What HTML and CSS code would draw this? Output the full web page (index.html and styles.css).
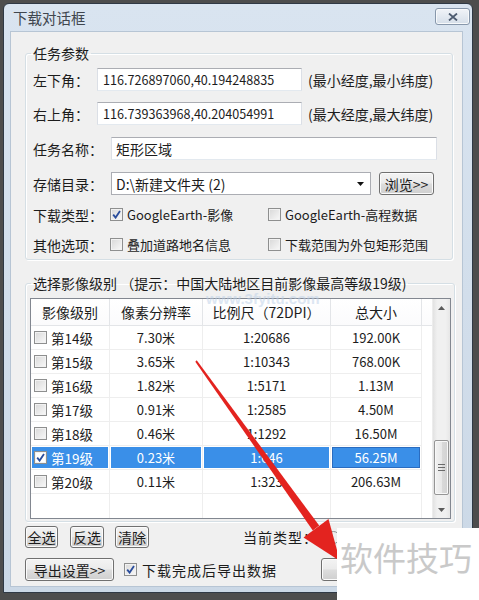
FILE: index.html
```html
<!DOCTYPE html>
<html lang="zh-CN">
<head>
<meta charset="utf-8">
<title>下载对话框</title>
<link rel="stylesheet" href="styles.css">
</head>
<body>
<div class="window">
  <div class="titlebar">
    <span class="title">下载对话框</span>
    <span class="close"><svg viewBox="0 0 10 8" width="10" height="8"><path d="M1 0.5 L9 7.5 M9 0.5 L1 7.5" stroke="#4d5b70" stroke-width="1.8" fill="none"/></svg></span>
  </div>
  <div class="client">
    <fieldset class="group g1">
      <legend>任务参数</legend>
      <div class="row r1">
        <span class="lbl">左下角：</span>
        <span class="input coord">116.726897060,40.194248835</span>
        <span class="note">(最小经度,最小纬度)</span>
      </div>
      <div class="row r2">
        <span class="lbl">右上角：</span>
        <span class="input coord">116.739363968,40.204054991</span>
        <span class="note">(最大经度,最大纬度)</span>
      </div>
      <div class="row r3">
        <span class="lbl">任务名称：</span>
        <span class="input name">矩形区域</span>
      </div>
      <div class="row r4">
        <span class="lbl">存储目录：</span>
        <span class="input combo"><span class="combo-text">D:\新建文件夹 (2)</span><svg class="drop" viewBox="0 0 7 4" width="7" height="4"><path d="M0 0 H7 L3.5 4 Z" fill="#111"/></svg></span>
        <span class="btn browse">浏览&gt;&gt;</span>
      </div>
      <div class="row r5">
        <span class="lbl">下载类型：</span>
        <span class="check first"><span class="cb on"><svg viewBox="0 0 9 9"><path d="M1.2 4.6 L3.6 7.6 L8 1" stroke="#2a4d9c" stroke-width="1.8" fill="none"/></svg></span>GoogleEarth-影像</span>
        <span class="check"><span class="cb"></span>GoogleEarth-高程数据</span>
      </div>
      <div class="row r6">
        <span class="lbl">其他选项：</span>
        <span class="check first"><span class="cb"></span>叠加道路地名信息</span>
        <span class="check"><span class="cb"></span>下载范围为外包矩形范围</span>
      </div>
    </fieldset>

    <fieldset class="group g2">
      <legend>选择影像级别 （提示：中国大陆地区目前影像最高等级19级)</legend>
      <div class="list">
        <div class="cols">
          <div class="hrow">
            <span class="hc">影像级别</span>
            <span class="hc">像素分辨率</span>
            <span class="hc">比例尺（72DPI）</span>
            <span class="hc">总大小</span>
            <span class="hc last"></span>
          </div>
          <div class="lrow"><span class="c c1"><span class="cb"></span>第14级</span><span class="c">7.30米</span><span class="c">1:20686</span><span class="c">192.00K</span><span class="c last"></span></div>
          <div class="lrow"><span class="c c1"><span class="cb"></span>第15级</span><span class="c">3.65米</span><span class="c">1:10343</span><span class="c">768.00K</span><span class="c last"></span></div>
          <div class="lrow"><span class="c c1"><span class="cb"></span>第16级</span><span class="c">1.82米</span><span class="c">1:5171</span><span class="c">1.13M</span><span class="c last"></span></div>
          <div class="lrow"><span class="c c1"><span class="cb"></span>第17级</span><span class="c">0.91米</span><span class="c">1:2585</span><span class="c">4.50M</span><span class="c last"></span></div>
          <div class="lrow"><span class="c c1"><span class="cb"></span>第18级</span><span class="c">0.46米</span><span class="c">1:1292</span><span class="c">16.50M</span><span class="c last"></span></div>
          <div class="lrow sel"><span class="c c1"><span class="cb on white"><svg viewBox="0 0 9 9"><path d="M1.2 4.6 L3.6 7.6 L8 1" stroke="#2a4d9c" stroke-width="1.8" fill="none"/></svg></span>第19级</span><span class="c">0.23米</span><span class="c">1:646</span><span class="c focus">56.25M</span><span class="c last"></span></div>
          <div class="lrow"><span class="c c1"><span class="cb"></span>第20级</span><span class="c">0.11米</span><span class="c">1:323</span><span class="c">206.63M</span><span class="c last"></span></div>
          <div class="lrow empty"><span class="c"></span><span class="c"></span><span class="c"></span><span class="c"></span><span class="c last"></span></div>
        </div>
        <div class="vscroll">
          <span class="sbtn"><svg viewBox="0 0 7 4" width="7" height="4"><path d="M0 4 H7 L3.5 0 Z" fill="#5a5a5a"/></svg></span>
          <span class="track"><span class="thumb"><span class="grip"></span></span></span>
          <span class="sbtn"><svg viewBox="0 0 7 4" width="7" height="4"><path d="M0 0 H7 L3.5 4 Z" fill="#5a5a5a"/></svg></span>
        </div>
      </div>
    </fieldset>

    <div class="btnrow b1">
      <span class="btn sm">全选</span>
      <span class="btn sm">反选</span>
      <span class="btn sm">清除</span>
      <span class="curtype">当前类型：</span>
      <span class="radio"></span>
    </div>
    <div class="btnrow b2">
      <span class="btn export">导出设置&gt;&gt;</span>
      <span class="check after"><span class="cb on"><svg viewBox="0 0 9 9"><path d="M1.2 4.6 L3.6 7.6 L8 1" stroke="#2a4d9c" stroke-width="1.8" fill="none"/></svg></span>下载完成后导出数据</span>
      <span class="btn hidden-btn"></span>
    </div>
  </div>
</div>

<span class="site-mark">www.3fyitu.com</span>
<svg class="arrow" viewBox="0 0 479 600" width="479" height="600">
  <path d="M195.3 361.7 L196.7 360.3 L319.2 525.6 L312.8 530.4 Z" fill="#e3231f"/>
  <path d="M303.5 537.5 L328.5 519 L340 561 Z" fill="#e3231f"/>
</svg>
<div class="badge">软件技巧</div>
</body>
</html>
```

FILE: styles.css
```css
* { box-sizing: border-box; }
html, body { margin: 0; padding: 0; }
body {
  width: 479px;
  height: 600px;
  overflow: hidden;
  position: relative;
  background: #4d4d4d;
  font-family: "Noto Sans CJK SC", "Noto Sans", sans-serif;
  font-size: 14px;
  color: #1c1c1c;
}

.window {
  margin: 3px 0 0 3px;
  width: 470px;
  height: 590px;
  border: 1px solid #2f3945;
  border-radius: 6px 6px 0 0;
  background: linear-gradient(#d9e4f0, #cbd8e6);
  padding: 0 9px 5px 6px;
  display: flex;
  flex-direction: column;
}

.titlebar {
  height: 27px;
  margin: 0 -9px 0 -6px;
  padding-left: 9px;
  display: flex;
  align-items: flex-start;
  justify-content: space-between;
  flex: none;
}
.title {
  line-height: 28px;
  font-size: 14.5px;
  color: #40464e;
}
.close {
  margin: 4px 2px 0 0;
  width: 35px;
  height: 17px;
  border: 1px solid #8797ab;
  border-radius: 3px;
  background: linear-gradient(#f1f4f8, #d5dee9);
  box-shadow: inset 0 0 0 1px #f7f9fb;
  display: flex;
  align-items: center;
  justify-content: center;
}

.client {
  flex: 1;
  background: #f0f0f0;
  border: 1px solid #b7c5d4;
  padding: 0 9px 0 14px;
  display: flex;
  flex-direction: column;
}

.group {
  margin: 0;
  min-width: 0;
  border: 1px solid #d5dfe5;
  border-radius: 3px;
  box-shadow: inset 1px 1px 0 #fff, 1px 1px 0 #fff;
}
.group legend {
  padding: 0 2px;
  line-height: 20px;
  font-size: 14px;
  color: #1c1c1c;
}
.g1 {
  width: 428px;
  margin-top: 11px;
  padding: 5px 0 3px 7px;
}
.g1 legend { margin-left: -2px; }

.row {
  display: flex;
  align-items: center;
  height: 23px;
  gap: 8px;
}
.r2 { margin-top: 11px; }
.r3 { margin-top: 12px; }
.r4 { margin-top: 12px; }
.r5 { margin-top: 8px; }
.r6 { margin-top: 7px; }

.lbl { white-space: nowrap; }

.input {
  height: 23px;
  background: #fff;
  border: 1px solid #dbdfe6;
  border-top-color: #abadb3;
  border-bottom-color: #e3e9ef;
  display: flex;
  align-items: center;
  padding-left: 5px;
  font-size: 14px;
  white-space: nowrap;
}
.coord { width: 205px; font-size: 12.6px; }
.note { margin-left: -2px; white-space: nowrap; }
.name { width: 326px; padding-left: 4px; }
.combo {
  width: 260px;
  justify-content: space-between;
  padding: 0 6px 0 4px;
  border-color: #abadb3;
}
.drop { flex: none; }

.btn {
  height: 23px;
  border: 1px solid #707070;
  border-radius: 3px;
  background: linear-gradient(#f3f3f3 0%, #ebebeb 48%, #dddddd 52%, #cfcfcf 100%);
  box-shadow: inset 0 0 0 1px #fbfbfb;
  display: inline-flex;
  align-items: center;
  justify-content: center;
  font-size: 14px;
  white-space: nowrap;
  flex: none;
}
.browse { width: 55px; margin-left: 0; }

.check {
  display: inline-flex;
  align-items: center;
  gap: 4px;
  font-size: 13px;
  white-space: nowrap;
}
.check.first { width: 158px; margin-left: -1px; }
.row .check + .check { margin-left: -8px; }

.cb {
  width: 13px;
  height: 13px;
  flex: none;
  border: 1px solid #8e8f8f;
  background: linear-gradient(135deg, #d8d8d8, #f9f9f9);
  box-shadow: inset 0 0 0 1px #f2f2f2;
  display: inline-flex;
  align-items: center;
  justify-content: center;
}
.cb svg { width: 9px; height: 9px; }
.cb.white { background: #fff; }

.g2 {
  width: 430px;
  margin-top: 13px;
  padding: 5px 3px 2px 4px;
}
.g2 legend { margin-left: 1px; white-space: nowrap; }

.list {
  width: 421px;
  height: 221px;
  border: 1px solid #828790;
  background: #fff;
  display: flex;
}
.cols {
  width: 401px;
  display: flex;
  flex-direction: column;
}
.hrow, .lrow {
  display: grid;
  grid-template-columns: 79px 93px 128px 91px 10px;
}
.hrow { height: 27px; }
.hc {
  border-right: 1px solid #e3e5e8;
  border-bottom: 1px solid #e3e5e8;
  display: flex;
  align-items: center;
  justify-content: center;
  font-size: 14px;
  white-space: nowrap;
  background: linear-gradient(#ffffff, #fbfbfc);
}
.hc.last { border-right: none; }
.lrow { height: 24px; }
.c {
  border-right: 1px solid #eeeeee;
  border-bottom: 1px solid #eeeeee;
  display: flex;
  align-items: center;
  justify-content: center;
  font-size: 13px;
  white-space: nowrap;
}
.c.last { border-right: none; border-bottom: none; }
.c1 {
  justify-content: flex-start;
  padding-left: 3px;
  gap: 4px;
  font-size: 13.5px;
}
.empty .c { border-bottom: none; }
.sel .c {
  background: #3a8fe8;
  color: #fff;
  box-shadow: inset 0 0 0 1px #fff;
}
.sel .c.last { background: #fff; box-shadow: none; }
.sel .c.focus { box-shadow: inset 0 0 0 1px #fff, inset 0 0 0 2px #2a6cc0; }

.vscroll {
  width: 18px;
  display: flex;
  flex-direction: column;
  background: linear-gradient(90deg, #e2e2e2, #f0f0f0 25%, #f0f0f0 75%, #e6e6e6);
  border-left: 1px solid #ececec;
}
.sbtn {
  height: 17px;
  display: flex;
  align-items: center;
  justify-content: center;
  flex: none;
}
.track { flex: 1; display: flex; flex-direction: column; }
.thumb {
  margin: 124px 1px 0 1px;
  height: 55px;
  border: 1px solid #959595;
  border-radius: 2px;
  background: linear-gradient(90deg, #f2f2f2, #e8e8e8 50%, #dadada 50%, #d2d2d2);
  box-shadow: inset 0 0 0 1px #f8f8f8;
  display: flex;
  align-items: center;
  justify-content: center;
}
.grip {
  width: 7px;
  height: 7px;
  background: repeating-linear-gradient(#6a6a6a 0 1px, transparent 1px 3px);
}

.btnrow {
  display: flex;
  align-items: center;
}
.b1 { margin-top: 4px; height: 22px; gap: 11px; }
.b1 .btn { height: 22px; }
.sm { width: 34px; }
.b1 .sm:first-child { width: 33px; margin-right: 1px; }
.curtype { margin-left: 83px; white-space: nowrap; font-size: 14px; letter-spacing: 1px; }
.radio {
  width: 13px;
  height: 13px;
  border: 1px solid #8e8f8f;
  border-radius: 50%;
  background: #eee;
  margin-left: -2px;
}
.b2 { margin-top: 10px; height: 23px; }
.export { width: 89px; }
.check.after { margin-left: 10px; gap: 5px; font-size: 14px; letter-spacing: 1px; }
.hidden-btn { width: 60px; margin-left: 44px; }

.site-mark {
  position: absolute;
  left: 206px;
  top: 290px;
  font-family: "Liberation Sans", sans-serif;
  font-size: 15px;
  font-weight: bold;
  color: #bcd0e8;
  opacity: 0.5;
}
.arrow {
  position: absolute;
  left: 0;
  top: 0;
  pointer-events: none;
}
.badge {
  position: absolute;
  left: 337px;
  top: 528px;
  width: 142px;
  height: 72px;
  background: #fff;
  color: #c9c9c9;
  font-size: 33px;
  line-height: 58px;
  padding-left: 3px;
}
```
